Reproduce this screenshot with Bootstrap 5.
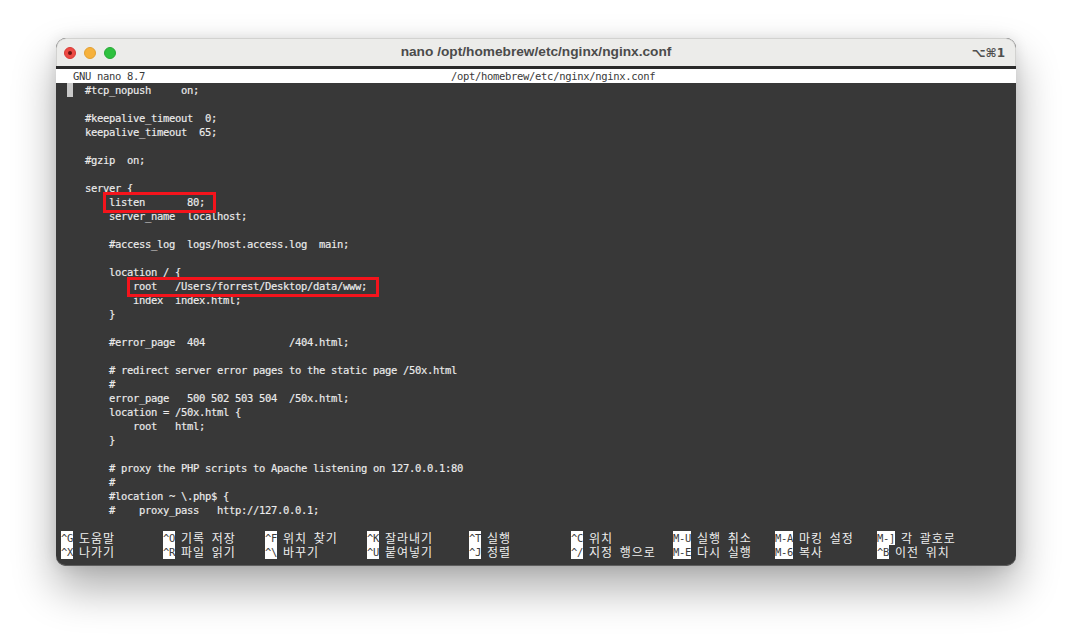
<!DOCTYPE html>
<html lang="ko">
<head>
<meta charset="utf-8">
<title>nano</title>
<link href="https://cdn.jsdelivr.net/npm/bootstrap@5.3.0/dist/css/bootstrap.min.css" rel="stylesheet">
<style>
html,body{background:#fff;height:100%;overflow:hidden}
.stage{padding:38px 56px 0}
.term-win{position:relative;width:960px;height:528px;border-radius:10px;overflow:hidden;background:#383838;box-shadow:inset 0 -1px 0 #5e5e5e}
.win-shadow{border-radius:10px;box-shadow:0 22px 44px rgba(0,0,0,.33),0 0 14px rgba(0,0,0,.1);width:960px}
.title-bar{height:28px;background:#ececea;border:1px solid #d2d2d0;border-bottom:0;border-radius:10px 10px 0 0;box-sizing:border-box;padding:0 10px 0 7px;flex:none}
.dot{width:12px;height:12px;border-radius:50%;display:block}
.dot-r{background:#ed4a44;border:1px solid #d63b36;position:relative}
.dot-r::after{content:"";position:absolute;left:3px;top:3px;width:4px;height:4px;border-radius:50%;background:#6d1512}
.dot-y{background:#f6b13c;border:1px solid #e2a033}
.dot-g{background:#2ec13f;border:1px solid #28a937}
.dots{gap:8px}
.win-title{font:700 13.7px/16px "Liberation Sans",Arial,sans-serif;color:#4b4b4b;left:0;right:0;top:5px;position:absolute;text-align:center}
.win-key{font:700 12px "DejaVu Sans","Liberation Sans",sans-serif;color:#4f4f4f;margin-left:auto}
.sep{height:3px;background:#2b2b2b;flex:none}
.scr,.scr-head,.key-row{font-family:"DejaVu Sans Mono",monospace;font-size:10.5px;line-height:14px;letter-spacing:-.32px;white-space:pre;margin:0}
.scr-head{background:#fff;color:#3a3a3a;padding:0 0 0 5px;height:14px;flex:none;overflow:hidden}
.scr{color:#ececec;padding:0 0 0 5px;height:448px;flex:none;overflow:hidden;position:relative;-webkit-text-stroke:.15px #ececec}
.cur{background:#c9c9c9;position:absolute;left:11px;top:0;width:6px;height:14px}
.key-grid{display:grid;grid-template-columns:repeat(9,102px);padding-left:5px;color:#ececec;grid-auto-rows:14px}
.key-row{display:flex;overflow:visible}
.kk{background:#fff;color:#3a3a3a;display:block}
.lbl{display:block;height:14px;font:400 12px/14px "Noto Sans CJK KR",sans-serif;letter-spacing:.96px;word-spacing:2.34px;margin-left:6px;color:#efefef}
.mark-box{position:absolute;border:3px solid #f4141c;pointer-events:none}
.mark-a{left:47px;top:154px;width:113px;height:21px}
.mark-b{left:71px;top:239px;width:252px;height:20px}
</style>
</head>
<body>
<div class="stage">
<div class="win-shadow">
<div class="term-win d-flex flex-column">
  <div class="title-bar d-flex align-items-center position-relative">
    <div class="d-flex dots"><span class="dot dot-r"></span><span class="dot dot-y"></span><span class="dot dot-g"></span></div>
    <div class="win-title">nano /opt/homebrew/etc/nginx/nginx.conf</div>
    <div class="win-key">⌥⌘1</div>
  </div>
  <div class="sep"></div>
  <pre class="scr-head">  GNU nano 8.7                                                   /opt/homebrew/etc/nginx/nginx.conf</pre>
  <pre class="scr"><span class="cur"></span>    #tcp_nopush     on;

    #keepalive_timeout  0;
    keepalive_timeout  65;

    #gzip  on;

    server {
        listen       80;
        server_name  localhost;

        #access_log  logs/host.access.log  main;

        location / {
            root   /Users/forrest/Desktop/data/www;
            index  index.html;
        }

        #error_page  404              /404.html;

        # redirect server error pages to the static page /50x.html
        #
        error_page   500 502 503 504  /50x.html;
        location = /50x.html {
            root   html;
        }

        # proxy the PHP scripts to Apache listening on 127.0.0.1:80
        #
        #location ~ \.php$ {
        #    proxy_pass   http://127.0.0.1;
</pre>
  <div class="key-grid">
    <div class="key-row"><span class="kk">^G</span><span class="lbl">도움말</span></div>
    <div class="key-row"><span class="kk">^O</span><span class="lbl">기록 저장</span></div>
    <div class="key-row"><span class="kk">^F</span><span class="lbl">위치 찾기</span></div>
    <div class="key-row"><span class="kk">^K</span><span class="lbl">잘라내기</span></div>
    <div class="key-row"><span class="kk">^T</span><span class="lbl">실행</span></div>
    <div class="key-row"><span class="kk">^C</span><span class="lbl">위치</span></div>
    <div class="key-row"><span class="kk">M-U</span><span class="lbl">실행 취소</span></div>
    <div class="key-row"><span class="kk">M-A</span><span class="lbl">마킹 설정</span></div>
    <div class="key-row"><span class="kk">M-]</span><span class="lbl">각 괄호로</span></div>
    <div class="key-row"><span class="kk">^X</span><span class="lbl">나가기</span></div>
    <div class="key-row"><span class="kk">^R</span><span class="lbl">파일 읽기</span></div>
    <div class="key-row"><span class="kk">^\</span><span class="lbl">바꾸기</span></div>
    <div class="key-row"><span class="kk">^U</span><span class="lbl">붙여넣기</span></div>
    <div class="key-row"><span class="kk">^J</span><span class="lbl">정렬</span></div>
    <div class="key-row"><span class="kk">^/</span><span class="lbl">지정 행으로</span></div>
    <div class="key-row"><span class="kk">M-E</span><span class="lbl">다시 실행</span></div>
    <div class="key-row"><span class="kk">M-6</span><span class="lbl">복사</span></div>
    <div class="key-row"><span class="kk">^B</span><span class="lbl">이전 위치</span></div>
  </div>
  <div class="mark-box mark-a"></div>
  <div class="mark-box mark-b"></div>
</div>
</div>
</div>
<script src="https://cdn.jsdelivr.net/npm/bootstrap@5.3.0/dist/js/bootstrap.bundle.min.js"></script>
</body>
</html>
